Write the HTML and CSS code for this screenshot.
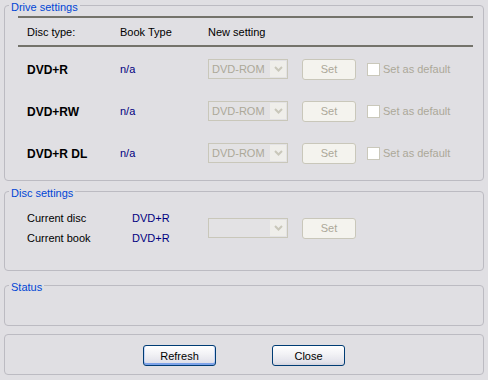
FILE: index.html
```html
<!DOCTYPE html>
<html lang="en">
<head>
    <meta charset="UTF-8">
    <title>Drive settings</title>
    <link rel="stylesheet" href="styles.css">
</head>
<body>

<fieldset class="group drive">
    <legend>Drive settings</legend>
    <div class="grid header">
        <span>Disc type:</span>
        <span>Book Type</span>
        <span>New setting</span>
    </div>
    <div class="grid row">
        <span class="disc">DVD+R</span>
        <span class="value">n/a</span>
        <div class="combo"><span class="combo-text">DVD-ROM</span><span class="combo-btn"><svg width="9" height="6" viewBox="0 0 9 6"><path d="M1 1l3.5 3.5L8 1" fill="none" stroke="#c9c7ba" stroke-width="2"/></svg></span></div>
        <span class="btn-set">Set</span>
        <label class="check"><span class="box"></span>Set as default</label>
    </div>
    <div class="grid row">
        <span class="disc">DVD+RW</span>
        <span class="value">n/a</span>
        <div class="combo"><span class="combo-text">DVD-ROM</span><span class="combo-btn"><svg width="9" height="6" viewBox="0 0 9 6"><path d="M1 1l3.5 3.5L8 1" fill="none" stroke="#c9c7ba" stroke-width="2"/></svg></span></div>
        <span class="btn-set">Set</span>
        <label class="check"><span class="box"></span>Set as default</label>
    </div>
    <div class="grid row">
        <span class="disc">DVD+R DL</span>
        <span class="value">n/a</span>
        <div class="combo"><span class="combo-text">DVD-ROM</span><span class="combo-btn"><svg width="9" height="6" viewBox="0 0 9 6"><path d="M1 1l3.5 3.5L8 1" fill="none" stroke="#c9c7ba" stroke-width="2"/></svg></span></div>
        <span class="btn-set">Set</span>
        <label class="check"><span class="box"></span>Set as default</label>
    </div>
</fieldset>

<fieldset class="group disc-group">
    <legend>Disc settings</legend>
    <div class="disc-body">
        <div class="disc-info">
            <span>Current disc</span>
            <span class="value">DVD+R</span>
            <span>Current book</span>
            <span class="value">DVD+R</span>
        </div>
        <div class="combo"><span class="combo-text"></span><span class="combo-btn"><svg width="9" height="6" viewBox="0 0 9 6"><path d="M1 1l3.5 3.5L8 1" fill="none" stroke="#c9c7ba" stroke-width="2"/></svg></span></div>
        <span class="btn-set">Set</span>
    </div>
</fieldset>

<fieldset class="group status">
    <legend>Status</legend>
    <div class="status-body"></div>
</fieldset>

<fieldset class="group actions">
    <button class="btn default">Refresh</button>
    <button class="btn">Close</button>
</fieldset>

</body>
</html>
```

FILE: styles.css
```css
body {
    margin: 0;
    background-color: #e0dfe3;
    font-family: "Liberation Sans", Arial, sans-serif;
    font-size: 11px;
    color: #000;
}
.group {
    margin: 0 4px;
    padding: 0;
    border: 1px solid #bcbbc2;
    border-radius: 4px;
    min-width: 0;
}
legend {
    margin-left: 4px;
    padding: 3px 2px 0;
    line-height: 8px;
    color: #0046d5;
}
.drive {
    margin-bottom: 5px;
    padding-bottom: 6px;
}
.grid {
    display: grid;
    grid-template-columns: 93px 88px 94px 65px auto;
    align-items: center;
}
.header {
    margin: 5px 10px 1px 13px;
    padding-left: 9px;
    height: 27px;
    border-top: 2px solid #74736b;
    border-bottom: 2px solid #74736b;
}
.row {
    height: 42px;
    padding-left: 22px;
}
.disc {
    font-weight: bold;
    font-size: 12px;
    padding-top: 1px;
}
.value {
    color: #000080;
}
.combo {
    display: flex;
    width: 80px;
    height: 20px;
    box-sizing: border-box;
    border: 1px solid #c9c7ba;
    background: #e3e2e4;
}
.combo-text {
    flex: 1;
    padding-left: 3px;
    line-height: 18px;
    color: #aca899;
}
.combo-btn {
    width: 16px;
    margin: 1px;
    background: #efeeea;
    display: flex;
    align-items: center;
    justify-content: center;
}
.btn-set {
    width: 54px;
    height: 21px;
    box-sizing: border-box;
    border: 1px solid #c9c7ba;
    border-radius: 3px;
    background: #f4f3ee;
    color: #aca899;
    display: flex;
    align-items: center;
    justify-content: center;
}
.check {
    display: flex;
    align-items: center;
    gap: 3px;
    color: #aca899;
}
.box {
    width: 13px;
    height: 13px;
    box-sizing: border-box;
    border: 1px solid #cac8bb;
    background: #fff;
}
.disc-group {
    margin-bottom: 9px;
}
.disc-body {
    display: flex;
    align-items: center;
    gap: 14px;
    padding: 11px 0 22px 22px;
}
.disc-info {
    display: grid;
    grid-template-columns: 105px 62px;
    grid-auto-rows: 20px;
    align-items: center;
}
.status {
    margin-bottom: 8px;
}
.status-body {
    height: 34px;
}
.actions {
    display: flex;
    justify-content: center;
    gap: 56px;
    padding: 10px 0 8px;
}
.btn {
    width: 73px;
    height: 21px;
    padding: 0;
    border: 1px solid #003c74;
    border-radius: 3px;
    background: linear-gradient(#ffffff, #f3f3f6 40%, #e2e2ea 85%, #d3d3dd);
    font-family: "Liberation Sans", Arial, sans-serif;
    font-size: 11px;
    color: #000;
}
.btn.default {
    box-shadow: inset 0 -2px 0 #7ea3e9, inset 1px 0 0 #c6d6f6, inset -1px 0 0 #c6d6f6;
}
```
